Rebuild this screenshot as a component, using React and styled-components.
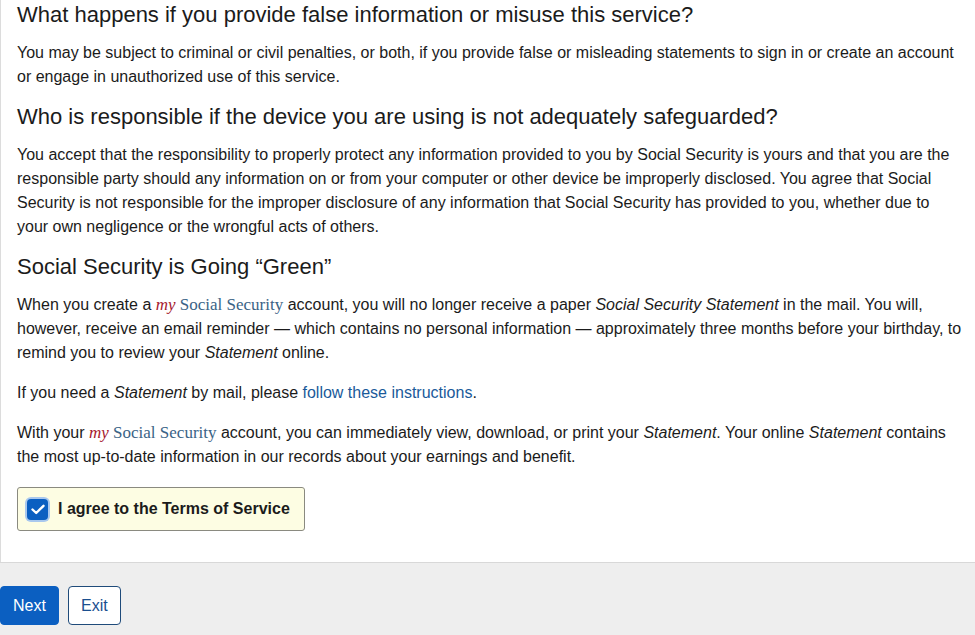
import React from "react";
import styled, { createGlobalStyle } from "styled-components";

const GlobalStyle = createGlobalStyle`
  html, body {
    margin: 0;
    padding: 0;
    background: #fff;
  }
  body {
    font-family: "Liberation Sans", Arial, Helvetica, sans-serif;
    color: #1b1b1b;
  }
`;

const Page = styled.div`
  width: 975px;
  height: 635px;
  overflow: hidden;
  display: flex;
  flex-direction: column;
`;

const Panel = styled.main`
  border-left: 1px solid #dcdcdc;
  padding: 3px 10px 31px 16px;
  background: #fff;
`;

const Heading = styled.h2`
  font-size: 22px;
  font-weight: 400;
  line-height: 24px;
  margin: 0 0 14px;
  color: #1b1b1b;
`;

const Para = styled.p`
  font-size: 16px;
  line-height: 24px;
  margin: 0 0 16px;
  color: #1b1b1b;
  em {
    font-style: italic;
  }
`;

const Brand = styled.span`
  font-family: "Liberation Serif", "Times New Roman", serif;
  font-size: 17px;
  color: #3a6386;
  em {
    color: #a6192e;
    font-style: italic;
  }
`;

const Link = styled.a`
  color: #1a5a9a;
  text-decoration: none;
`;

const AgreeBox = styled.label`
  display: inline-flex;
  align-items: center;
  gap: 10px;
  margin-top: 2px;
  height: 42px;
  width: 268px;
  padding: 0 9px;
  background: #fdfde3;
  border: 1px solid #8a8a80;
  border-radius: 3px;
  font-weight: 700;
  font-size: 16px;
  color: #1b1b1b;
  cursor: pointer;
`;

const Check = styled.span`
  width: 21px;
  height: 21px;
  border-radius: 4px;
  background: #0b5fc1;
  box-shadow: 0 0 0 2px #a9c8ee;
  display: flex;
  align-items: center;
  justify-content: center;
`;

const Footer = styled.footer`
  flex: 1;
  background: #eeeeee;
  border-top: 1px solid #d8d8d8;
  padding: 23px 0 0;
  display: flex;
  gap: 9px;
  align-items: flex-start;
`;

const Button = styled.button`
  height: 39px;
  padding: 0 12px;
  min-width: ${(p) => (p.$primary ? "59px" : "52px")};
  font-family: "Liberation Sans", Arial, sans-serif;
  font-size: 16px;
  border-radius: 4px;
  cursor: pointer;
  background: ${(p) => (p.$primary ? "#0b5fc1" : "#fff")};
  color: ${(p) => (p.$primary ? "#fff" : "#1a4f8f")};
  border: 1px solid ${(p) => (p.$primary ? "#0b5fc1" : "#1f4b7a")};
`;

function MySocialSecurity() {
  return (
    <Brand>
      <em>my</em> Social Security
    </Brand>
  );
}

export default function App() {
  return (
    <Page>
      <GlobalStyle />
      <Panel>
        <Heading>What happens if you provide false information or misuse this service?</Heading>
        <Para>
          You may be subject to criminal or civil penalties, or both, if you provide false or misleading
          statements to sign in or create an account or engage in unauthorized use of this service.
        </Para>
        <Heading>Who is responsible if the device you are using is not adequately safeguarded?</Heading>
        <Para>
          You accept that the responsibility to properly protect any information provided to you by Social
          Security is yours and that you are the responsible party should any information on or from your
          computer or other device be improperly disclosed. You agree that Social Security is not responsible
          for the improper disclosure of any information that Social Security has provided to you, whether due
          to your own negligence or the wrongful acts of others.
        </Para>
        <Heading>Social Security is Going “Green”</Heading>
        <Para>
          When you create a <MySocialSecurity /> account, you will no longer receive a paper{" "}
          <em>Social Security Statement</em> in the mail. You will, however, receive an email reminder — which
          contains no personal information — approximately three months before your birthday, to remind you to
          review your <em>Statement</em> online.
        </Para>
        <Para>
          If you need a <em>Statement</em> by mail, please <Link href="#">follow these instructions</Link>.
        </Para>
        <Para>
          With your <MySocialSecurity /> account, you can immediately view, download, or print your{" "}
          <em>Statement</em>. Your online <em>Statement</em> contains the most up-to-date information in our
          records about your earnings and benefit.
        </Para>
        <AgreeBox>
          <Check>
            <svg width="14" height="11" viewBox="0 0 14 11" fill="none">
              <path d="M1.5 5.5 L5.2 9 L12.5 1.8" stroke="#fff" strokeWidth="2.4" strokeLinecap="round" strokeLinejoin="round" />
            </svg>
          </Check>
          I agree to the Terms of Service
        </AgreeBox>
      </Panel>
      <Footer>
        <Button $primary>Next</Button>
        <Button>Exit</Button>
      </Footer>
    </Page>
  );
}
